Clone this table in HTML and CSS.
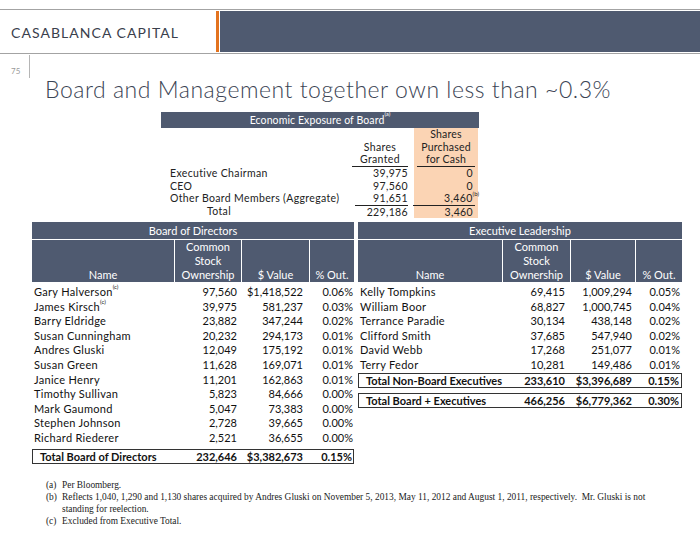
FILE: index.html
```html
<!DOCTYPE html>
<html>
<head>
<meta charset="utf-8">
<link rel="stylesheet" href="styles.css">
</head>
<body>
<header class="top">
  <div class="brand">CASABLANCA CAPITAL</div>
  <div class="accent"></div>
  <div class="bar"></div>
</header>
<div class="sub"><span class="pg">75</span></div>
<h1 class="title">Board and Management together own less than ~0.3%</h1>

<section class="econ">
  <div class="econ-head">Economic Exposure of Board<sup class="fn">(a)</sup></div>
  <div class="econ-grid">
    <div class="e-lab"></div>
    <div class="e-num e-hd">Shares<br>Granted</div>
    <div class="e-gap"></div>
    <div class="e-peach e-hd"><span class="hd-in">Shares<br>Purchased<br>for Cash</span></div>

    <div class="e-lab">Executive Chairman</div>
    <div class="e-num">39,975</div>
    <div class="e-gap"></div>
    <div class="e-peach">0</div>

    <div class="e-lab">CEO</div>
    <div class="e-num">97,560</div>
    <div class="e-gap"></div>
    <div class="e-peach">0</div>

    <div class="e-lab">Other Board Members (Aggregate)</div>
    <div class="e-num">91,651</div>
    <div class="e-gap"></div>
    <div class="e-peach">3,460<sup class="fn fn-hang">(b)</sup></div>

    <div class="e-lab e-total">Total</div>
    <div class="e-num e-tot">229,186</div>
    <div class="e-gap"></div>
    <div class="e-peach"><span class="tot-in">3,460</span></div>
  </div>
</section>

<section class="tables">
  <div class="tbl bod">
    <div class="t-title">Board of Directors</div>
    <div class="t-grid t-head">
      <div class="h-cell">Name</div>
      <div class="h-cell">Common<br>Stock<br>Ownership</div>
      <div class="h-cell">$ Value</div>
      <div class="h-cell">% Out.</div>
    </div>
    <div class="t-body">
      <div class="t-grid row"><div class="c-name">Gary Halverson<sup class="fn">(c)</sup></div><div class="c-n1">97,560</div><div class="c-n2">$1,418,522</div><div class="c-n3">0.06%</div></div>
      <div class="t-grid row"><div class="c-name">James Kirsch<sup class="fn">(c)</sup></div><div class="c-n1">39,975</div><div class="c-n2">581,237</div><div class="c-n3">0.03%</div></div>
      <div class="t-grid row"><div class="c-name">Barry Eldridge</div><div class="c-n1">23,882</div><div class="c-n2">347,244</div><div class="c-n3">0.02%</div></div>
      <div class="t-grid row"><div class="c-name">Susan Cunningham</div><div class="c-n1">20,232</div><div class="c-n2">294,173</div><div class="c-n3">0.01%</div></div>
      <div class="t-grid row"><div class="c-name">Andres Gluski</div><div class="c-n1">12,049</div><div class="c-n2">175,192</div><div class="c-n3">0.01%</div></div>
      <div class="t-grid row"><div class="c-name">Susan Green</div><div class="c-n1">11,628</div><div class="c-n2">169,071</div><div class="c-n3">0.01%</div></div>
      <div class="t-grid row"><div class="c-name">Janice Henry</div><div class="c-n1">11,201</div><div class="c-n2">162,863</div><div class="c-n3">0.01%</div></div>
      <div class="t-grid row"><div class="c-name">Timothy Sullivan</div><div class="c-n1">5,823</div><div class="c-n2">84,666</div><div class="c-n3">0.00%</div></div>
      <div class="t-grid row"><div class="c-name">Mark Gaumond</div><div class="c-n1">5,047</div><div class="c-n2">73,383</div><div class="c-n3">0.00%</div></div>
      <div class="t-grid row"><div class="c-name">Stephen Johnson</div><div class="c-n1">2,728</div><div class="c-n2">39,665</div><div class="c-n3">0.00%</div></div>
      <div class="t-grid row"><div class="c-name">Richard Riederer</div><div class="c-n1">2,521</div><div class="c-n2">36,655</div><div class="c-n3">0.00%</div></div>
      <div class="t-grid box box-bod"><div class="c-name">Total Board of Directors</div><div class="c-n1">232,646</div><div class="c-n2">$3,382,673</div><div class="c-n3">0.15%</div></div>
    </div>
  </div>

  <div class="tbl exec">
    <div class="t-title">Executive Leadership</div>
    <div class="t-grid t-head">
      <div class="h-cell">Name</div>
      <div class="h-cell">Common<br>Stock<br>Ownership</div>
      <div class="h-cell">$ Value</div>
      <div class="h-cell">% Out.</div>
    </div>
    <div class="t-body">
      <div class="t-grid row"><div class="c-name">Kelly Tompkins</div><div class="c-n1">69,415</div><div class="c-n2">1,009,294</div><div class="c-n3">0.05%</div></div>
      <div class="t-grid row"><div class="c-name">William Boor</div><div class="c-n1">68,827</div><div class="c-n2">1,000,745</div><div class="c-n3">0.04%</div></div>
      <div class="t-grid row"><div class="c-name">Terrance Paradie</div><div class="c-n1">30,134</div><div class="c-n2">438,148</div><div class="c-n3">0.02%</div></div>
      <div class="t-grid row"><div class="c-name">Clifford Smith</div><div class="c-n1">37,685</div><div class="c-n2">547,940</div><div class="c-n3">0.02%</div></div>
      <div class="t-grid row"><div class="c-name">David Webb</div><div class="c-n1">17,268</div><div class="c-n2">251,077</div><div class="c-n3">0.01%</div></div>
      <div class="t-grid row"><div class="c-name">Terry Fedor</div><div class="c-n1">10,281</div><div class="c-n2">149,486</div><div class="c-n3">0.01%</div></div>
      <div class="t-grid box box-exec1"><div class="c-name">Total Non-Board Executives</div><div class="c-n1">233,610</div><div class="c-n2">$3,396,689</div><div class="c-n3">0.15%</div></div>
      <div class="t-grid box box-exec2"><div class="c-name">Total Board + Executives</div><div class="c-n1">466,256</div><div class="c-n2">$6,779,362</div><div class="c-n3">0.30%</div></div>
    </div>
  </div>
</section>

<ul class="notes">
  <li><span class="mk">(a)</span><span class="nt">Per Bloomberg.</span></li>
  <li><span class="mk">(b)</span><span class="nt">Reflects 1,040, 1,290 and 1,130 shares acquired by Andres Gluski on November 5, 2013, May 11, 2012 and August 1, 2011, respectively.&nbsp; Mr. Gluski is not<br>standing for reelection.</span></li>
  <li><span class="mk">(c)</span><span class="nt">Excluded from Executive Total.</span></li>
</ul>
</body>
</html>
```

FILE: styles.css
```css
* { box-sizing: border-box; }
html, body { margin: 0; padding: 0; background: #fff; }
body { width: 700px; height: 535px; overflow: hidden; font-family: "Lato", "Liberation Sans", sans-serif; color: #111; }

.top {
  margin-top: 9px;
  border-top: 1px solid #a3a3a3;
  border-bottom: 1px solid #a3a3a3;
  padding: 1px 0;
  display: flex;
  height: 45px;
}
.brand {
  width: 216px;
  padding-left: 11px;
  padding-top: 2px;
  display: flex;
  align-items: center;
  font-size: 14px;
  letter-spacing: 1.05px;
  color: #3a404c;
}
.accent { width: 3px; background: #e3731f; }
.bar { flex: 1; margin-left: 1px; background: #4f5a70; }

.sub { height: 24px; display: flex; }
.pg {
  width: 30px;
  padding-left: 11px;
  padding-top: 11px;
  margin-top: 1px;
  border-right: 1px solid #b5b5b5;
  font-size: 8px;
  color: #9a9a9a;
}

.title {
  margin: -2px 0 0 0;
  padding-left: 45px;
  font-size: 23px;
  line-height: 26px;
  font-weight: 300;
  color: #3b4454;
  letter-spacing: 0.53px;
}

.econ { margin: 10px 0 0 161px; width: 318px; font-size: 10.5px; color: #222; letter-spacing: 0.35px; }
.econ-head {
  height: 16px;
  background: #4f5a70;
  color: #fff;
  text-align: center;
  line-height: 16px;
  letter-spacing: 0.1px;
}
.econ-grid {
  display: grid;
  grid-template-columns: 191px 56px 6px 64px;
  grid-template-rows: 39px 12.6px 12.6px 12.6px 13.2px;
  line-height: 12.6px;
}
.e-lab { padding-left: 9px; white-space: nowrap; }
.e-total { padding-left: 46px; }
.e-num { text-align: right; white-space: nowrap; }
.e-num.e-hd {
  text-align: center;
  line-height: 12.5px;
  padding-top: 12.5px;
  border-bottom: 1px solid #222;
}
.e-peach { background: #fbd4b4; text-align: right; padding-right: 5px; white-space: nowrap; }
.e-peach.e-hd { padding: 0 3px; display: flex; }
.hd-in {
  flex: 1;
  text-align: center;
  line-height: 12.5px;
  border-bottom: 1px solid #222;
  letter-spacing: 0.2px;
}
.e-tot { border-top: 1px solid #222; margin-left: 3px; }
.tot-in { display: block; border-top: 1px solid #222; margin-left: -1px; margin-right: -2px; padding-right: 2px; }
.fn { font-size: 6px; vertical-align: top; line-height: 8px; position: relative; top: -2px; letter-spacing: 0; }
.fn-hang { margin-right: -6px; }

.tables { display: flex; gap: 4px; margin: 4px 0 0 32px; font-size: 11px; }
.tbl.bod { width: 322px; }
.tbl.exec { width: 324px; }
.t-title {
  height: 17px;
  background: #4f5a70;
  color: #fff;
  text-align: center;
  line-height: 17px;
  margin-bottom: 1px;
}
.t-grid { display: grid; column-gap: 1px; }
.bod .t-grid { grid-template-columns: 142px 66px 67px 44px; }
.exec .t-grid { grid-template-columns: 144px 67px 64px 46px; }
.t-head { height: 42px; }
.h-cell {
  background: #4f5a70;
  color: #fff;
  text-align: center;
  display: flex;
  align-items: flex-end;
  justify-content: center;
  line-height: 14px;
}
.t-body { padding-top: 3px; }
.row { height: 14.6px; line-height: 14.6px; white-space: nowrap; color: #111; }
.c-name { padding-left: 2px; }
.row .c-name { letter-spacing: 0.3px; }
.c-n1, .c-n2, .c-n3 { text-align: right; }
.bod .c-n1 { padding-right: 4px; }
.bod .c-n2 { padding-right: 6px; }
.bod .c-n3 { padding-right: 1px; }
.exec .c-n1 { padding-right: 5px; }
.exec .c-n2 { padding-right: 3px; }
.exec .c-n3 { padding-right: 2px; }

.box {
  border: 1px solid #333;
  height: 15px;
  line-height: 13px;
  font-weight: 700;
  column-gap: 0;
  white-space: nowrap;
}
.bod .box { grid-template-columns: 141px 67px 68px 1fr; margin-top: 3.4px; }
.exec .box { grid-template-columns: 143px 68px 65px 1fr; }
.box .c-name { padding-left: 7px; }
.box-exec2 { margin-top: 5px; }

.notes {
  list-style: none;
  margin: 15px 0 0 46px;
  padding: 0;
  width: 640px;
  font-family: "Liberation Serif", "Times New Roman", serif;
  font-size: 9.4px;
  line-height: 12px;
  color: #222;
  white-space: nowrap;
}
.notes li { display: flex; }
.mk { width: 16px; flex: none; }
.nt { flex: 1; }
```
